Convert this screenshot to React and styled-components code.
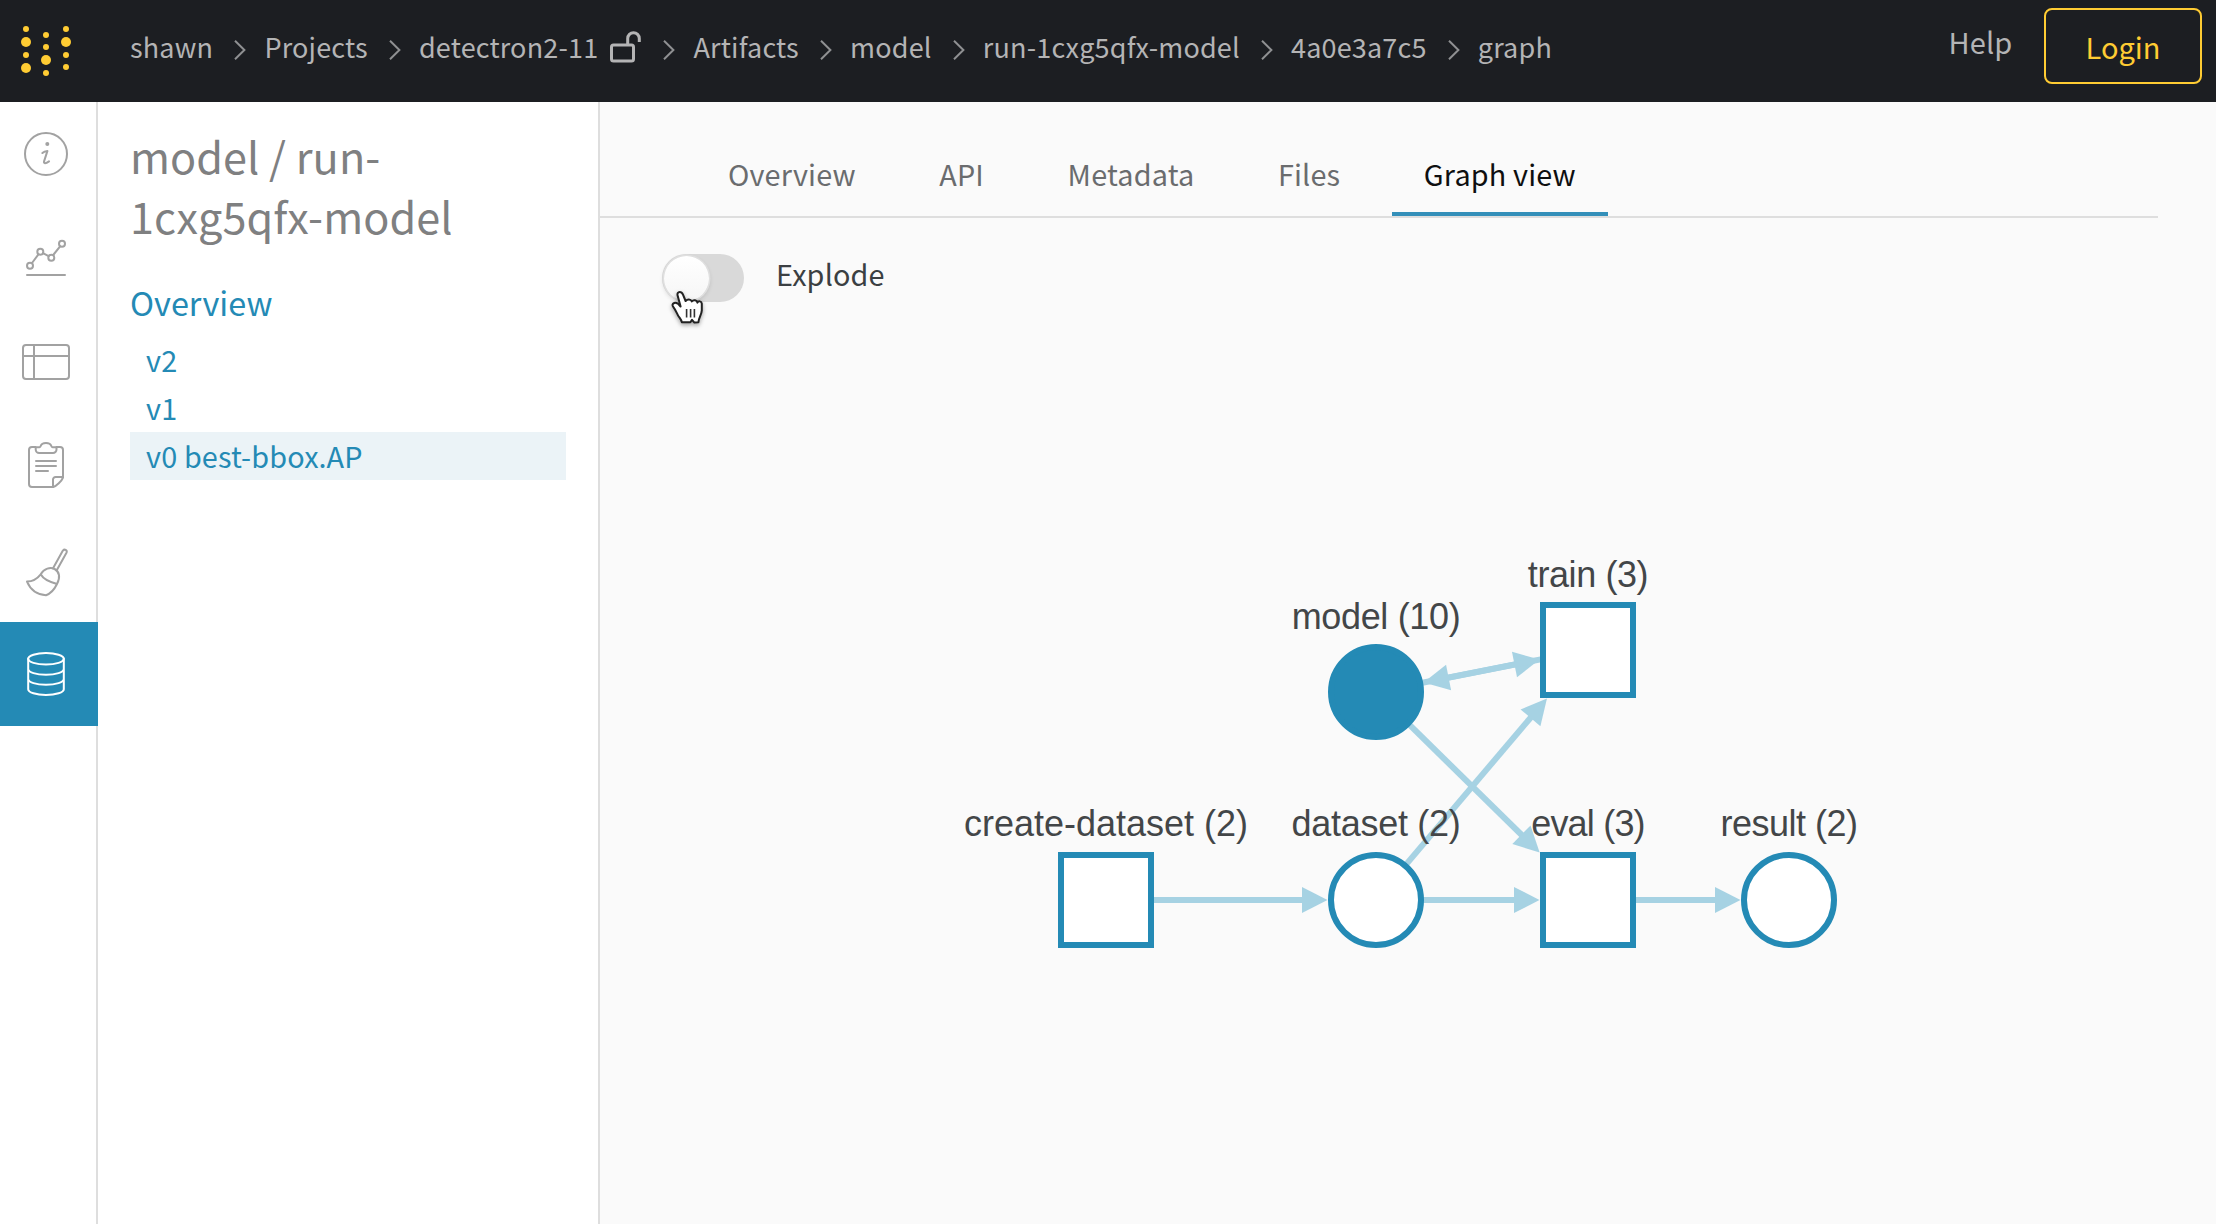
import React from "react";
import styled, { createGlobalStyle, css } from "styled-components";

const teal = "#248ab5";
const edge = "#a6d2e3";
const line = "#dedede";
const gold = "#ffcc33";

const GlobalStyle = createGlobalStyle`
  * { box-sizing: border-box; }
  html, body { margin: 0; padding: 0; }
  body {
    font-family: "Noto Sans CJK SC", "Source Sans Pro", sans-serif;
    font-size: 28.8px;
    letter-spacing: 0.15px;
    color: #3b3f42;
    background: #fafafa;
  }
`;

const Page = styled.div`
  width: 2216px;
  height: 1224px;
  display: flex;
  flex-direction: column;
  overflow: hidden;
`;

const Header = styled.header`
  flex: none;
  height: 102px;
  display: flex;
  background: #1c1e22;
  color: #b4b4b5;
`;

const Logo = styled.svg`
  flex: none;
  width: 92px;
  height: 102px;
  margin-right: 38px;
  fill: ${gold};
`;

const Crumbs = styled.nav`
  height: 92px;
  display: flex;
  align-items: center;
  font-size: 27px;
`;

const Crumb = styled.span`
  padding-top: 2px;
  white-space: nowrap;
  line-height: 40px;
  letter-spacing: 0.17px;
`;

const Chevron = styled.svg`
  flex: none;
  width: 12px;
  height: 20px;
  margin: 7px 18.3px 0 20.9px;
  fill: none;
  stroke: #8f9092;
  stroke-width: 2;
`;

const Lock = styled.svg`
  flex: none;
  width: 31px;
  height: 32px;
  margin: 1px 1px 0 12px;
  fill: none;
  stroke: #b4b4b5;
  stroke-width: 3;
`;

const Actions = styled.div`
  margin-left: auto;
  padding: 8px 14px 0 0;
  display: flex;
  gap: 31.5px;
  line-height: 67px;
`;

const HelpLink = styled.span`
  font-size: 29px;
`;

const LoginButton = styled.button`
  width: 158px;
  height: 76px;
  padding: 0;
  border: 2px solid ${gold};
  border-radius: 8px;
  background: none;
  color: ${gold};
  font: inherit;
  font-size: 29px;
  line-height: 72px;
`;

const Body = styled.div`
  flex: 1;
  display: flex;
  min-height: 0;
`;

const Rail = styled.aside`
  flex: none;
  width: 98px;
  background: linear-gradient(to right, #fff 96px, ${line} 96px);
`;

const RailItem = styled.div`
  height: 104px;
  padding-right: 6px;
  display: flex;
  align-items: center;
  justify-content: center;
  color: #a2a2a2;
  ${(p) => p.$active && css`
    background: ${teal};
    color: #fff;
  `}
`;

const RailIcon = styled.svg`
  width: 48px;
  height: 48px;
  overflow: visible;
  fill: none;
  stroke: currentColor;
  stroke-width: 2;
  stroke-linecap: round;
  stroke-linejoin: round;
`;

const Sidebar = styled.section`
  flex: none;
  width: 502px;
  padding: 23px 32px 0;
  background: #fff;
  border-right: 2px solid ${line};
`;

const SidebarTitle = styled.h1`
  margin: 0 0 34px;
  font-size: 43.2px;
  font-weight: 400;
  line-height: 60px;
  letter-spacing: 0.05px;
  color: #7f8081;
`;

const SidebarLink = styled.div`
  height: 57px;
  line-height: 46px;
  font-size: 32.4px;
  letter-spacing: 0.05px;
  color: ${teal};
`;

const Version = styled.div`
  height: 48px;
  padding-left: 16px;
  line-height: 48px;
  color: ${teal};
  background: ${(p) => (p.$active ? "#ebf3f7" : "none")};
`;

const Main = styled.main`
  flex: 1;
  min-width: 0;
  display: flex;
  flex-direction: column;
  background: #fafafa;
`;

const Tabs = styled.div`
  flex: none;
  height: 116px;
  width: 1558px;
  padding: 30px 0 0 96px;
  display: flex;
  gap: 19.6px;
  border-bottom: 2px solid ${line};
`;

const Tab = styled.div`
  padding: 0 32px;
  line-height: 84px;
  height: 84px;
  white-space: nowrap;
  letter-spacing: 0.17px;
  color: ${(p) => (p.$active ? "#0e0f10" : "#6a6c6e")};
  box-shadow: inset 0 -4px ${(p) => (p.$active ? "#338fb9" : "transparent")};
`;

const ToggleRow = styled.label`
  flex: none;
  height: 48px;
  margin: 36px 0 0 62px;
  display: flex;
  gap: 32px;
`;

const Track = styled.span`
  position: relative;
  width: 82px;
  height: 48px;
  border-radius: 24px;
  background: #d9d9d9;
`;

const Thumb = styled.span`
  display: block;
  width: 45px;
  height: 45px;
  margin: 1.5px;
  border-radius: 50%;
  background: linear-gradient(#fff, #f6f6f6);
  box-shadow: 0 0 0 1.5px #dfdfdf, 0 2px 4px 1px rgba(0, 0, 0, 0.12);
`;

const Pointer = styled.svg`
  position: absolute;
  left: 9px;
  top: 36px;
  width: 34px;
  height: 38px;
  overflow: visible;
  filter: drop-shadow(0 2px 2px rgba(0, 0, 0, 0.35));
`;

const ToggleLabel = styled.span`
  line-height: 39px;
`;

const Graph = styled.svg`
  flex: none;
  width: 1616px;
  height: 922px;
  font-family: "Liberation Sans", Arial, sans-serif;
  font-size: 36px;
`;

const NodeShape = styled.g`
  fill: ${(p) => (p.$filled ? teal : "#fff")};
  stroke: ${teal};
  stroke-width: 6;
`;

const NodeLabel = styled.text`
  fill: #434648;
  text-anchor: middle;
  letter-spacing: ${(p) => p.$tracking || 0}px;
`;

const logoDots = [
  [26, 29, 3], [26, 42, 5], [26, 55, 3], [26, 68, 5],
  [46, 35, 3], [46, 47, 3], [46, 60, 5], [46, 73, 3],
  [66, 29, 3], [66, 42, 5], [66, 55, 3], [66, 67, 3],
];

const crumbs = [
  { text: "shawn" },
  { text: "Projects" },
  { text: "detectron2-11", lock: true },
  { text: "Artifacts" },
  { text: "model" },
  { text: "run-1cxg5qfx-model" },
  { text: "4a0e3a7c5" },
  { text: "graph" },
];

const tabs = ["Overview", "API", "Metadata", "Files", "Graph view"];

const icons = [
  <>
    <circle cx="24" cy="24" r="21" />
    <circle cx="25.3" cy="14" r="2" fill="currentColor" stroke="none" />
    <path d="M20.4 23C21.8 21.8 23.6 21.2 25.4 21L22.1 31.2C21.5 33.6 23.4 34 27 31.4" strokeWidth="2.1" />
  </>,
  <>
    <path d="M10 29L16.4 20.4M21 19.2L26.6 22.2M31.2 21L38.1 12.4M5 41H43" />
    <circle cx="8" cy="31.8" r="3" />
    <circle cx="18.3" cy="17.8" r="3" />
    <circle cx="29.3" cy="23.8" r="3" />
    <circle cx="40" cy="9.8" r="3" />
  </>,
  <>
    <rect x="1" y="7" width="46" height="34" rx="3" />
    <path d="M1 18H47M12 7V41" />
  </>,
  <>
    <path d="M13.5 5H10a3 3 0 0 0-3 3V42a3 3 0 0 0 3 3H31.2C34 44.4 40 38.6 41 35.6V8a3 3 0 0 0-3-3H34.5" />
    <path d="M13.7 5.2V7.5a3.5 3.5 0 0 0 3.5 3.5H31a3.5 3.5 0 0 0 3.5-3.5V5.2H30.5C29.8 5.2 29.4 4.6 29.2 3.8C28.6 1.8 26.5 1 24 1S19.4 1.8 18.8 3.8C18.6 4.6 18.2 5.2 17.5 5.2Z" />
    <path d="M14 19H34M14 24H34M14 29H26M31 45V37.6a2.6 2.6 0 0 1 2.6-2.6H41" />
  </>,
  <>
    <path d="M30.9 22.4L40.9 4.6C42.6 2.6 45.4 4.2 44.6 6.4L34.6 24.4" />
    <path d="M18.7 28.3C22 22.4 28.4 20.8 32.6 23C37.4 25.6 38.6 31.4 35 38C29 36.4 21.6 33.8 18.7 28.3C15 33 10.4 35.4 5 35.6C8.4 43.6 15.2 48.6 24 49.2C29 47.4 32.6 43 35 38" />
  </>,
  <>
    <ellipse cx="24" cy="8.8" rx="17.8" ry="5.8" />
    <path d="M6.2 8.8V39.2A17.8 5.8 0 0 0 41.8 39.2V8.8M6.2 19A17.8 5.8 0 0 0 41.8 19M6.2 29A17.8 5.8 0 0 0 41.8 29" />
  </>,
];

// Node centres, relative to the canvas below the toggle row.
const nodes = {
  create: { x: 506, y: 598, label: "create-dataset (2)", box: true },
  dataset: { x: 776, y: 598, label: "dataset (2)", tracking: -0.3 },
  evaluate: { x: 988, y: 598, label: "eval (3)", box: true, tracking: -0.8 },
  result: { x: 1189, y: 598, label: "result (2)", tracking: -0.5 },
  model: { x: 776, y: 390, label: "model (10)", filled: true, tracking: -0.35 },
  train: { x: 988, y: 348, label: "train (3)", box: true, tracking: -0.4 },
};

const edges = [
  ["create", "dataset"],
  ["dataset", "evaluate"],
  ["evaluate", "result"],
  ["model", "train"],
  ["train", "model"],
  ["model", "evaluate"],
  ["dataset", "train"],
];

// Distance from a node's centre to its border along the unit vector (ux, uy).
const reach = (node, ux, uy) =>
  node.box ? 48 / Math.max(Math.abs(ux), Math.abs(uy)) : 48;

function Edge({ from, to }) {
  const a = nodes[from];
  const b = nodes[to];
  const len = Math.hypot(b.x - a.x, b.y - a.y);
  const ux = (b.x - a.x) / len;
  const uy = (b.y - a.y) / len;
  const start = reach(a, ux, uy);
  const tip = len - reach(b, ux, uy) - 0.5;
  const angle = (Math.atan2(uy, ux) * 180) / Math.PI;
  return (
    <g transform={`translate(${a.x} ${a.y}) rotate(${angle})`} fill={edge}>
      <rect x={start - 2} y={-3} width={tip - 22 - start} height={6} />
      <path d={`M${tip} 0L${tip - 25.5} -13V13Z`} />
    </g>
  );
}

function Node({ x, y, label, box, filled, tracking }) {
  return (
    <>
      <NodeShape $filled={filled}>
        {box ? (
          <rect x={x - 45} y={y - 45} width="90" height="90" />
        ) : (
          <circle cx={x} cy={y} r="45" />
        )}
      </NodeShape>
      <NodeLabel x={x} y={y - 64 + (y < 598 ? 0.5 : 0)} $tracking={tracking}>{label}</NodeLabel>
    </>
  );
}

export default function App() {
  return (
    <Page>
      <GlobalStyle />
      <Header>
        <Logo viewBox="0 0 92 102">
          {logoDots.map(([cx, cy, r]) => (
            <circle key={`${cx}-${cy}`} cx={cx} cy={cy} r={r} />
          ))}
        </Logo>
        <Crumbs>
          {crumbs.map((c, i) => (
            <React.Fragment key={c.text}>
              {i > 0 && (
                <Chevron viewBox="0 0 12 20">
                  <path d="M1 .8L10.4 10L1 19.2" />
                </Chevron>
              )}
              <Crumb>{c.text}</Crumb>
              {c.lock && (
                <Lock viewBox="0 0 31 32">
                  <rect x="1.5" y="14" width="22" height="16" rx="2" />
                  <path d="M17.7 14V7.5a5.8 5.8 0 0 1 11.6 0V11" />
                </Lock>
              )}
            </React.Fragment>
          ))}
        </Crumbs>
        <Actions>
          <HelpLink>Help</HelpLink>
          <LoginButton>Login</LoginButton>
        </Actions>
      </Header>
      <Body>
        <Rail>
          {icons.map((icon, i) => (
            <RailItem key={i} $active={i === 5}>
              <RailIcon viewBox="0 0 48 48">{icon}</RailIcon>
            </RailItem>
          ))}
        </Rail>
        <Sidebar>
          <SidebarTitle>model / run-<br />1cxg5qfx-model</SidebarTitle>
          <SidebarLink>Overview</SidebarLink>
          <Version>v2</Version>
          <Version>v1</Version>
          <Version $active>v0 best-bbox.AP</Version>
        </Sidebar>
        <Main>
          <Tabs>
            {tabs.map((t) => (
              <Tab key={t} $active={t === "Graph view"}>{t}</Tab>
            ))}
          </Tabs>
          <ToggleRow>
            <Track>
              <Thumb />
              <Pointer viewBox="0 0 34 38">
                <path
                  d="M8.7 2C7 2 6 3.6 6.6 5.6L9.6 16.6C7.8 14.2 5.4 12.2 3.2 13C1.2 13.8 1 15.4 2.4 17.2C4.4 19.8 5.6 22.6 7.4 26C9 28.4 10.4 29.6 10.8 32.2H19.4L21 29.8L23.4 32.6L27.4 32.2C27.6 27.6 30.6 25 30.8 20.4V13.6C30.6 11 27.4 10.6 26.4 12.6C26 10 22.4 9.4 20.8 11.4C19.6 9 16.4 9 14.6 11L12 4.6C11.2 2.8 10.2 2 8.7 2Z"
                  fill="#fff" stroke="#222" strokeWidth="2" strokeLinejoin="round"
                />
                <path d="M15.6 19V27.6M19.6 19V27.6M23.4 19V27.6" stroke="#333" strokeWidth="1.6" />
              </Pointer>
            </Track>
            <ToggleLabel>Explode</ToggleLabel>
          </ToggleRow>
          <Graph viewBox="0 0 1616 922">
            {edges.map(([a, b]) => <Edge key={a + b} from={a} to={b} />)}
            {Object.entries(nodes).map(([k, n]) => <Node key={k} {...n} />)}
          </Graph>
        </Main>
      </Body>
    </Page>
  );
}
